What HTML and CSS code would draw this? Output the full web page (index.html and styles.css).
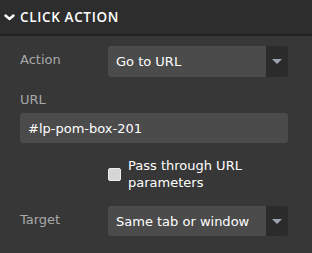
FILE: index.html
```html
<!DOCTYPE html>
<html lang="en">
<head>
  <meta charset="UTF-8" />
  <title>Click Action</title>
  <link rel="stylesheet" href="styles.css">
</head>
<body>

  <div class="panel">
    <div class="panel-head">
      <svg class="chevron" width="11" height="7" viewBox="0 0 11 7">
        <polyline points="1.5,1.5 5.5,5 9.5,1.5" fill="none" stroke="#fff" stroke-width="2.4" stroke-linecap="round" stroke-linejoin="round" />
      </svg>
      <span>CLICK ACTION</span>
    </div>

    <div class="panel-body">
      <div class="row">
        <label class="label">Action</label>
        <div class="select">
          <div class="select-value">Go to URL</div>
          <div class="select-btn"><span class="caret"></span></div>
        </div>
      </div>

      <label class="label label-block">URL</label>
      <div class="input">#lp-pom-box-201</div>

      <div class="check-row">
        <span class="checkbox"></span>
        <span class="check-text">Pass through URL parameters</span>
      </div>

      <div class="row row-target">
        <label class="label">Target</label>
        <div class="select">
          <div class="select-value">Same tab or window</div>
          <div class="select-btn"><span class="caret"></span></div>
        </div>
      </div>
    </div>
  </div>

</body>
</html>
```

FILE: styles.css
```css
body {
  margin: 0;
  font-family: 'DejaVu Sans', sans-serif;
  font-size: 13px;
  background-color: #373737;
  color: #fff;
}
.panel {
  width: 312px;
  height: 253px;
  background-color: #373737;
}
.panel-head {
  height: 36px;
  background-color: #2d2d2d;
  border-bottom: 2px solid #222;
  display: flex;
  align-items: center;
  padding-left: 4px;
  box-sizing: border-box;
  font-family: 'Open Sans', sans-serif;
  font-size: 13.5px;
  font-weight: 600;
  letter-spacing: 0.65px;
}
.chevron {
  margin-right: 5px;
}
.panel-body {
  padding: 10px 24px 0 20px;
}
.row {
  display: flex;
  align-items: flex-start;
}
.label {
  width: 88px;
  flex-shrink: 0;
  color: #a9a9a9;
  line-height: 16px;
  padding-top: 6px;
}
.label-block {
  display: block;
  width: auto;
  padding-top: 0;
  margin-top: 15px;
  margin-bottom: 5px;
}
.select {
  flex: 1;
  display: flex;
  height: 31px;
  border-radius: 3px;
  overflow: hidden;
}
.select-value {
  flex: 1;
  background-color: #4b4b4b;
  padding-left: 8px;
  display: flex;
  align-items: center;
}
.select-btn {
  width: 22px;
  background-color: #2b2b2b;
  display: flex;
  align-items: center;
  justify-content: center;
}
.caret {
  width: 0;
  height: 0;
  border-left: 5px solid transparent;
  border-right: 5px solid transparent;
  border-top: 5px solid #9ba5b1;
}
.input {
  height: 30px;
  background-color: #4b4b4b;
  border-radius: 3px;
  padding-left: 8px;
  display: flex;
  align-items: center;
}
.check-row {
  display: flex;
  align-items: flex-start;
  margin-top: 14px;
  padding-left: 88px;
}
.checkbox {
  width: 11px;
  height: 11px;
  margin-top: 11px;
  margin-right: 7px;
  flex-shrink: 0;
  background-color: #d6d6d6;
  border: 1px solid #eee;
  border-radius: 2px;
}
.check-text {
  line-height: 17px;
}
.row-target {
  margin-top: 15px;
}
.row-target .select {
  height: 30px;
}
```
